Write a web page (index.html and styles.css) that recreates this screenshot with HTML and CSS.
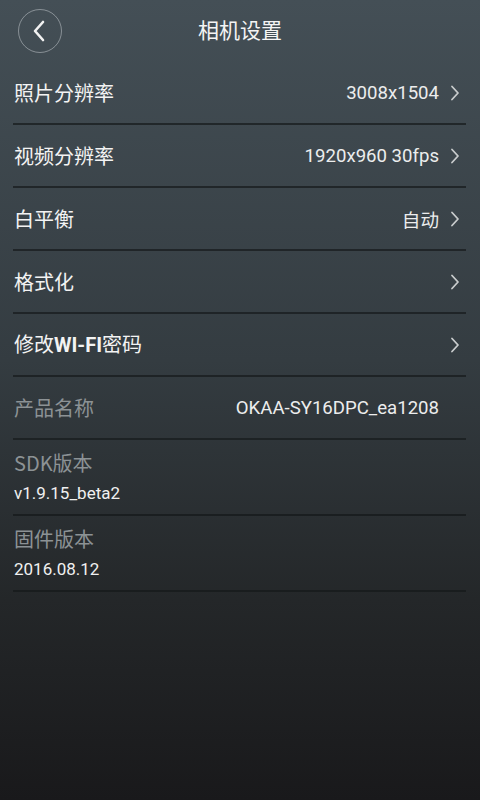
FILE: index.html
```html
<!DOCTYPE html>
<html lang="zh-CN">
<head>
<meta charset="utf-8">
<title>相机设置</title>
<link rel="stylesheet" href="styles.css">
</head>
<body>
<div class="screen">
  <header class="header">
    <div class="header-left">
      <button class="back" aria-label="返回">
        <svg width="14" height="22" viewBox="0 0 14 22"><path d="M11 2 L3 11 L11 20" fill="none" stroke="#f2f2f2" stroke-width="2.6" stroke-linecap="round" stroke-linejoin="round"/></svg>
      </button>
    </div>
    <h1 class="title">相机设置</h1>
    <div class="header-right"></div>
  </header>

  <ul class="list">
    <li class="row">
      <span class="label">照片分辨率</span>
      <span class="value">3008x1504</span>
      <span class="chev"><svg width="10" height="16" viewBox="0 0 10 16"><path d="M2 1.5 L8 8 L2 14.5" fill="none" stroke="#c9cccd" stroke-width="1.8" stroke-linecap="round" stroke-linejoin="round"/></svg></span>
    </li>
    <li class="row">
      <span class="label">视频分辨率</span>
      <span class="value">1920x960 30fps</span>
      <span class="chev"><svg width="10" height="16" viewBox="0 0 10 16"><path d="M2 1.5 L8 8 L2 14.5" fill="none" stroke="#c9cccd" stroke-width="1.8" stroke-linecap="round" stroke-linejoin="round"/></svg></span>
    </li>
    <li class="row">
      <span class="label">白平衡</span>
      <span class="value">自动</span>
      <span class="chev"><svg width="10" height="16" viewBox="0 0 10 16"><path d="M2 1.5 L8 8 L2 14.5" fill="none" stroke="#c9cccd" stroke-width="1.8" stroke-linecap="round" stroke-linejoin="round"/></svg></span>
    </li>
    <li class="row">
      <span class="label">格式化</span>
      <span class="value"></span>
      <span class="chev"><svg width="10" height="16" viewBox="0 0 10 16"><path d="M2 1.5 L8 8 L2 14.5" fill="none" stroke="#c9cccd" stroke-width="1.8" stroke-linecap="round" stroke-linejoin="round"/></svg></span>
    </li>
    <li class="row">
      <span class="label">修改<b class="latin-bold">WI-FI</b>密码</span>
      <span class="value"></span>
      <span class="chev"><svg width="10" height="16" viewBox="0 0 10 16"><path d="M2 1.5 L8 8 L2 14.5" fill="none" stroke="#c9cccd" stroke-width="1.8" stroke-linecap="round" stroke-linejoin="round"/></svg></span>
    </li>
    <li class="row">
      <span class="label muted">产品名称</span>
      <span class="value">OKAA-SY16DPC_ea1208</span>
      <span class="chev"></span>
    </li>
    <li class="block">
      <span class="label muted">SDK版本</span>
      <span class="sub">v1.9.15_beta2</span>
    </li>
    <li class="block">
      <span class="label muted">固件版本</span>
      <span class="sub">2016.08.12</span>
    </li>
  </ul>
</div>
</body>
</html>
```
FILE: styles.css
```css
* { box-sizing: border-box; }
html, body { margin: 0; padding: 0; height: 100%; }
body {
  font-family: Roboto, "Noto Sans CJK SC", "Noto Sans", sans-serif;
  color: #f0f1f1;
  background: linear-gradient(to bottom, #444f56 0%, #343c41 45%, #242729 75%, #19191b 100%);
  min-height: 800px;
}
.screen { width: 480px; min-height: 800px; }

.header {
  height: 62px;
  display: grid;
  grid-template-columns: 1fr auto 1fr;
  align-items: center;
}
.header-left { padding-left: 18px; display: flex; align-items: center; }
.back {
  width: 44px; height: 44px;
  border-radius: 50%;
  border: 1px solid rgba(220, 225, 228, 0.45);
  background: transparent;
  display: flex; align-items: center; justify-content: center;
  padding: 0 3px 0 0;
}
.title {
  margin: 0 0 4px 0;
  font-family: "Noto Sans CJK SC", sans-serif;
  font-size: 21px;
  font-weight: 400;
  color: #f4f4f4;
  line-height: 1;
}

.list {
  list-style: none;
  margin: 0 14px 0 13px;
  padding: 0;
}
.row {
  height: 63px;
  display: flex;
  align-items: center;
  padding: 0 6px 0 1px;
  border-bottom: 2px solid rgba(24, 28, 30, 0.75);
}
.label {
  font-family: "Noto Sans CJK SC", sans-serif;
  font-size: 20px;
  line-height: 24px;
  color: #f3f3f3;
  flex: 1;
  white-space: nowrap;
}
.label.muted { color: #8c9295; }
.latin-bold { font-family: Roboto, sans-serif; font-weight: 700; }
.value {
  font-family: Roboto, "Noto Sans CJK SC", sans-serif;
  font-size: 18.6px;
  color: #eceded;
  white-space: nowrap;
}
.chev {
  width: 10px;
  margin-left: 11px;
  display: flex;
  align-items: center;
  padding-top: 1px;
}
.block {
  display: flex;
  flex-direction: column;
  gap: 6px;
  padding: 11px 0 9px 1px;
  border-bottom: 2px solid rgba(22, 25, 27, 0.75);
}
.block .label { flex: none; }
.sub {
  font-family: Roboto, sans-serif;
  font-size: 17px;
  line-height: 24px;
  color: #f0f0f0;
}
```
